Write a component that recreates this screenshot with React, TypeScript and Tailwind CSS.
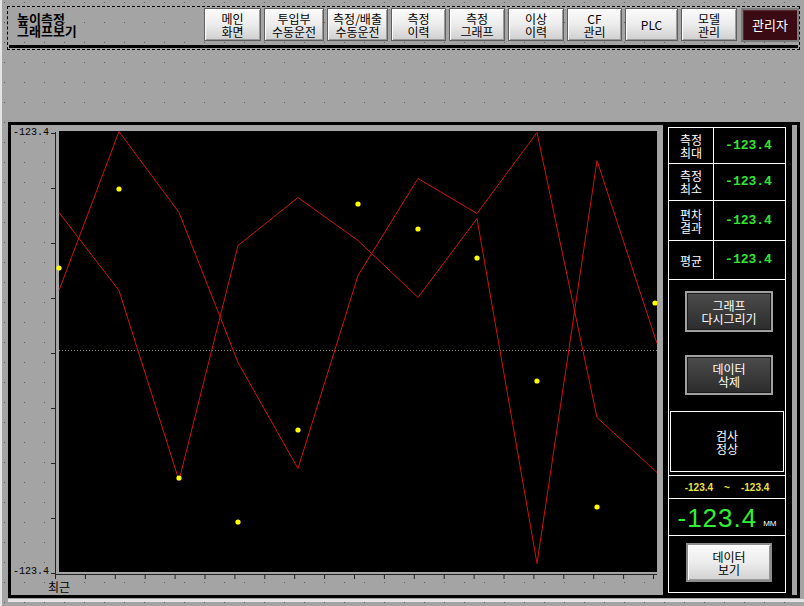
import React from "react";

const KR = "font-['Noto_Sans_CJK_KR','Noto_Sans',sans-serif]";

const navButtons = [
  { label: ["메인", "화면"], w: "w-[57px]" },
  { label: ["투입부", "수동운전"], w: "w-[60px]" },
  { label: ["측정/배출", "수동운전"], w: "w-[61px]" },
  { label: ["측정", "이력"], w: "w-[55px]" },
  { label: ["측정", "그래프"], w: "w-[56px]" },
  { label: ["이상", "이력"], w: "w-[56px]" },
  { label: ["CF", "관리"], w: "w-[55px]" },
  { label: ["PLC"], w: "w-[53px]" },
  { label: ["모델", "관리"], w: "w-[56px]" },
];

const stats = [
  { label: ["측정", "최대"], h: "h-[36px]" },
  { label: ["측정", "최소"], h: "h-[37px]" },
  { label: ["편차", "결과"], h: "h-[40px]" },
  { label: ["평균"], h: "h-[39px]" },
];

// chart points, relative to the black plot (598 x 441)
const lineA = [
  [0, 81], [60, 159], [120, 349], [179, 114], [239, 66], [299, 109],
  [359, 166], [418, 87], [478, 432], [538, 29], [598, 212],
];
const lineB = [
  [0, 159], [60, 0], [120, 81], [179, 231], [239, 337], [299, 144],
  [359, 47], [418, 82], [478, 1], [538, 286], [598, 341],
];
const dots = [
  [0, 137], [60, 58], [120, 347], [179, 391], [239, 299], [299, 73],
  [359, 98], [418, 127], [478, 250], [538, 376], [596, 172],
];

const toPts = (p: number[][]) => p.map(([x, y]) => `${x},${y + 0.5}`).join(" ");

function NavButton({ label, w }: { label: string[]; w: string }) {
  return (
    <button
      className={`${w} h-[33px] flex flex-col items-center justify-center border border-[#5e5e5e] bg-gradient-to-b from-[#fbfbfb] via-[#ececec] to-[#cfcfcf] shadow-[inset_1px_1px_0_#ffffff,inset_-1px_-1px_0_#9a9a9a] text-black text-[12px] leading-[13px] ${KR}`}
    >
      {label.map((l) => (
        <span key={l}>{l}</span>
      ))}
    </button>
  );
}

function DarkButton({ lines, h }: { lines: string[]; h: string }) {
  return (
    <button
      className={`ml-[16px] w-[88px] ${h} flex flex-col items-center justify-center border-2 border-[#a0a0a0] bg-gradient-to-b from-[#4c4c4c] to-[#2c2c2c] shadow-[inset_1px_1px_0_#1a1a1a,inset_-1px_-1px_0_#1a1a1a] text-white text-[12px] leading-[13px] ${KR}`}
    >
      {lines.map((l) => (
        <span key={l}>{l}</span>
      ))}
    </button>
  );
}

export default function App() {
  return (
    <div
      className={`w-[804px] h-[606px] overflow-hidden bg-[#a4a4a4] bg-[radial-gradient(circle_at_0.5px_0.5px,#5e5e5e_0.6px,transparent_0.8px)] bg-[length:20px_20px] bg-[position:2px_2px] border-l-2 border-[#e4e4e4] ${KR}`}
    >
      {/* Header */}
      <div className="mt-[6px] ml-[5px] w-[793px] h-[44px] border border-dashed border-black flex flex-col">
        <div className="flex items-start h-[37px]">
          <div className="w-[196px] pl-[9px] pt-[6px] text-[13px] leading-[12px] font-bold text-black">
            <div>높이측정</div>
            <div>그래프보기</div>
          </div>
          <div className="flex gap-[3px] mt-[1px]">
            {navButtons.map((b) => (
              <NavButton key={b.label.join("")} label={b.label} w={b.w} />
            ))}
            <button className="w-[58px] h-[34px] ml-[1px] flex items-center justify-center border-2 border-[#7a7a7a] bg-[#3a0b12] shadow-[inset_1px_1px_0_#5a2a30] text-white text-[13px]">
              관리자
            </button>
          </div>
        </div>
        <div className="h-[3px] bg-black mt-[1px] mx-px" />
      </div>

      {/* Main frame */}
      <div className="mt-[72px] ml-[6px] w-[792px] h-[476px] border-[3px] border-black flex">
        {/* Chart area */}
        <div className="w-[652px] flex flex-col pt-[6px]">
          <div className="flex">
            <div className="relative w-[48px] h-[441px]">
              <span className="absolute left-[2px] top-[-3px] text-[10px] leading-[10px] text-black font-['Liberation_Mono',monospace]">
                -123.4
              </span>
              <span className="absolute left-[2px] top-[436px] text-[10px] leading-[10px] text-black font-['Liberation_Mono',monospace]">
                -123.4
              </span>
              <svg width="48" height="449" className="absolute left-0 top-0 overflow-visible">
                <line x1="44.5" y1="1" x2="44.5" y2="443" stroke="#222" strokeWidth="1" />
                {Array.from({ length: 9 }).map((_, i) => (
                  <line
                    key={i}
                    x1="40"
                    x2="45"
                    y1={2.5 + i * 55}
                    y2={2.5 + i * 55}
                    stroke="#222"
                    strokeWidth="1"
                  />
                ))}
              </svg>
            </div>
            <div className="w-[598px] h-[441px] bg-black">
              <svg width="598" height="441" className="block overflow-visible">
                <line x1="0" y1="219.5" x2="598" y2="219.5" stroke="#8a8a6a" strokeWidth="1" strokeDasharray="1 2" />
                <polyline points={toPts(lineA)} fill="none" stroke="#d01010" strokeWidth="1" />
                <polyline points={toPts(lineB)} fill="none" stroke="#d01010" strokeWidth="1" />
                {dots.map(([x, y], i) => (
                  <circle key={i} cx={x} cy={y} r="2.6" fill="#ffff00" />
                ))}
              </svg>
            </div>
          </div>
          <svg width="606" height="8" className="ml-[44px] block">
            <line x1="0" y1="2.5" x2="602" y2="2.5" stroke="#222" strokeWidth="1" />
            {Array.from({ length: 21 }).map((_, i) => (
              <line
                key={i}
                x1={0.5 + i * 29.9}
                x2={0.5 + i * 29.9}
                y1="2"
                y2="7"
                stroke="#222"
                strokeWidth="1"
              />
            ))}
          </svg>
          <div className="ml-[37px] text-[12px] leading-[13px] text-black">최근</div>
        </div>

        {/* Right panel */}
        <div className="w-[129px] bg-black pt-[2px] pl-[5px] pr-[6px] pb-[2px]">
          <div className="h-full border border-white flex flex-col">
            {stats.map((s) => (
              <div key={s.label.join("")} className={`flex ${s.h} border-b border-white`}>
                <div className="w-[45px] border-r border-white flex flex-col items-center justify-center text-white text-[12px] leading-[13px]">
                  {s.label.map((l) => (
                    <span key={l}>{l}</span>
                  ))}
                </div>
                <div className="flex-1 flex items-center justify-center pr-[2px] text-[#33e433] text-[13px] font-bold font-['Liberation_Mono',monospace]">
                  -123.4
                </div>
              </div>
            ))}

            <div className="h-[196px] border-b border-white pt-[11px] flex flex-col">
              <DarkButton lines={["그래프", "다시그리기"]} h="h-[41px]" />
              <div className="h-[23px]" />
              <DarkButton lines={["데이터", "삭제"]} h="h-[40px]" />
              <div className="mt-[16px] mx-px h-[61px] border border-white flex flex-col items-center justify-center text-white text-[12px] leading-[13px]">
                <span>검사</span>
                <span>정상</span>
              </div>
            </div>

            <div className="h-[23px] border-b border-white flex items-center justify-center gap-[11px] text-[#f0e040] text-[10px] font-bold font-['Liberation_Sans',sans-serif]">
              <span>-123.4</span>
              <span>~</span>
              <span>-123.4</span>
            </div>

            <div className="h-[37px] border-b border-white flex items-end justify-center pb-[4px] gap-[6px]">
              <span className="text-[#33ee33] text-[26px] leading-[26px] tracking-[1px] font-['Liberation_Sans',sans-serif]">
                -123.4
              </span>
              <span className="text-white text-[8px] leading-[8px] mb-[3px] font-['Liberation_Sans',sans-serif]">MM</span>
            </div>

            <div className="flex-1 pt-[7px]">
              <button className="ml-[17px] w-[86px] h-[39px] flex flex-col items-center justify-center border-2 border-[#8c8c8c] bg-gradient-to-b from-[#fafafa] via-[#ececec] to-[#d2d2d2] shadow-[inset_1px_1px_0_#ffffff,inset_-1px_-1px_0_#9a9a9a] text-black text-[12px] leading-[13px]">
                <span>데이터</span>
                <span>보기</span>
              </button>
            </div>
          </div>
        </div>
      </div>
      <div className="ml-[6px] mt-[1px] h-[3px] w-[796px] bg-[#e4e4e4]" />
    </div>
  );
}
